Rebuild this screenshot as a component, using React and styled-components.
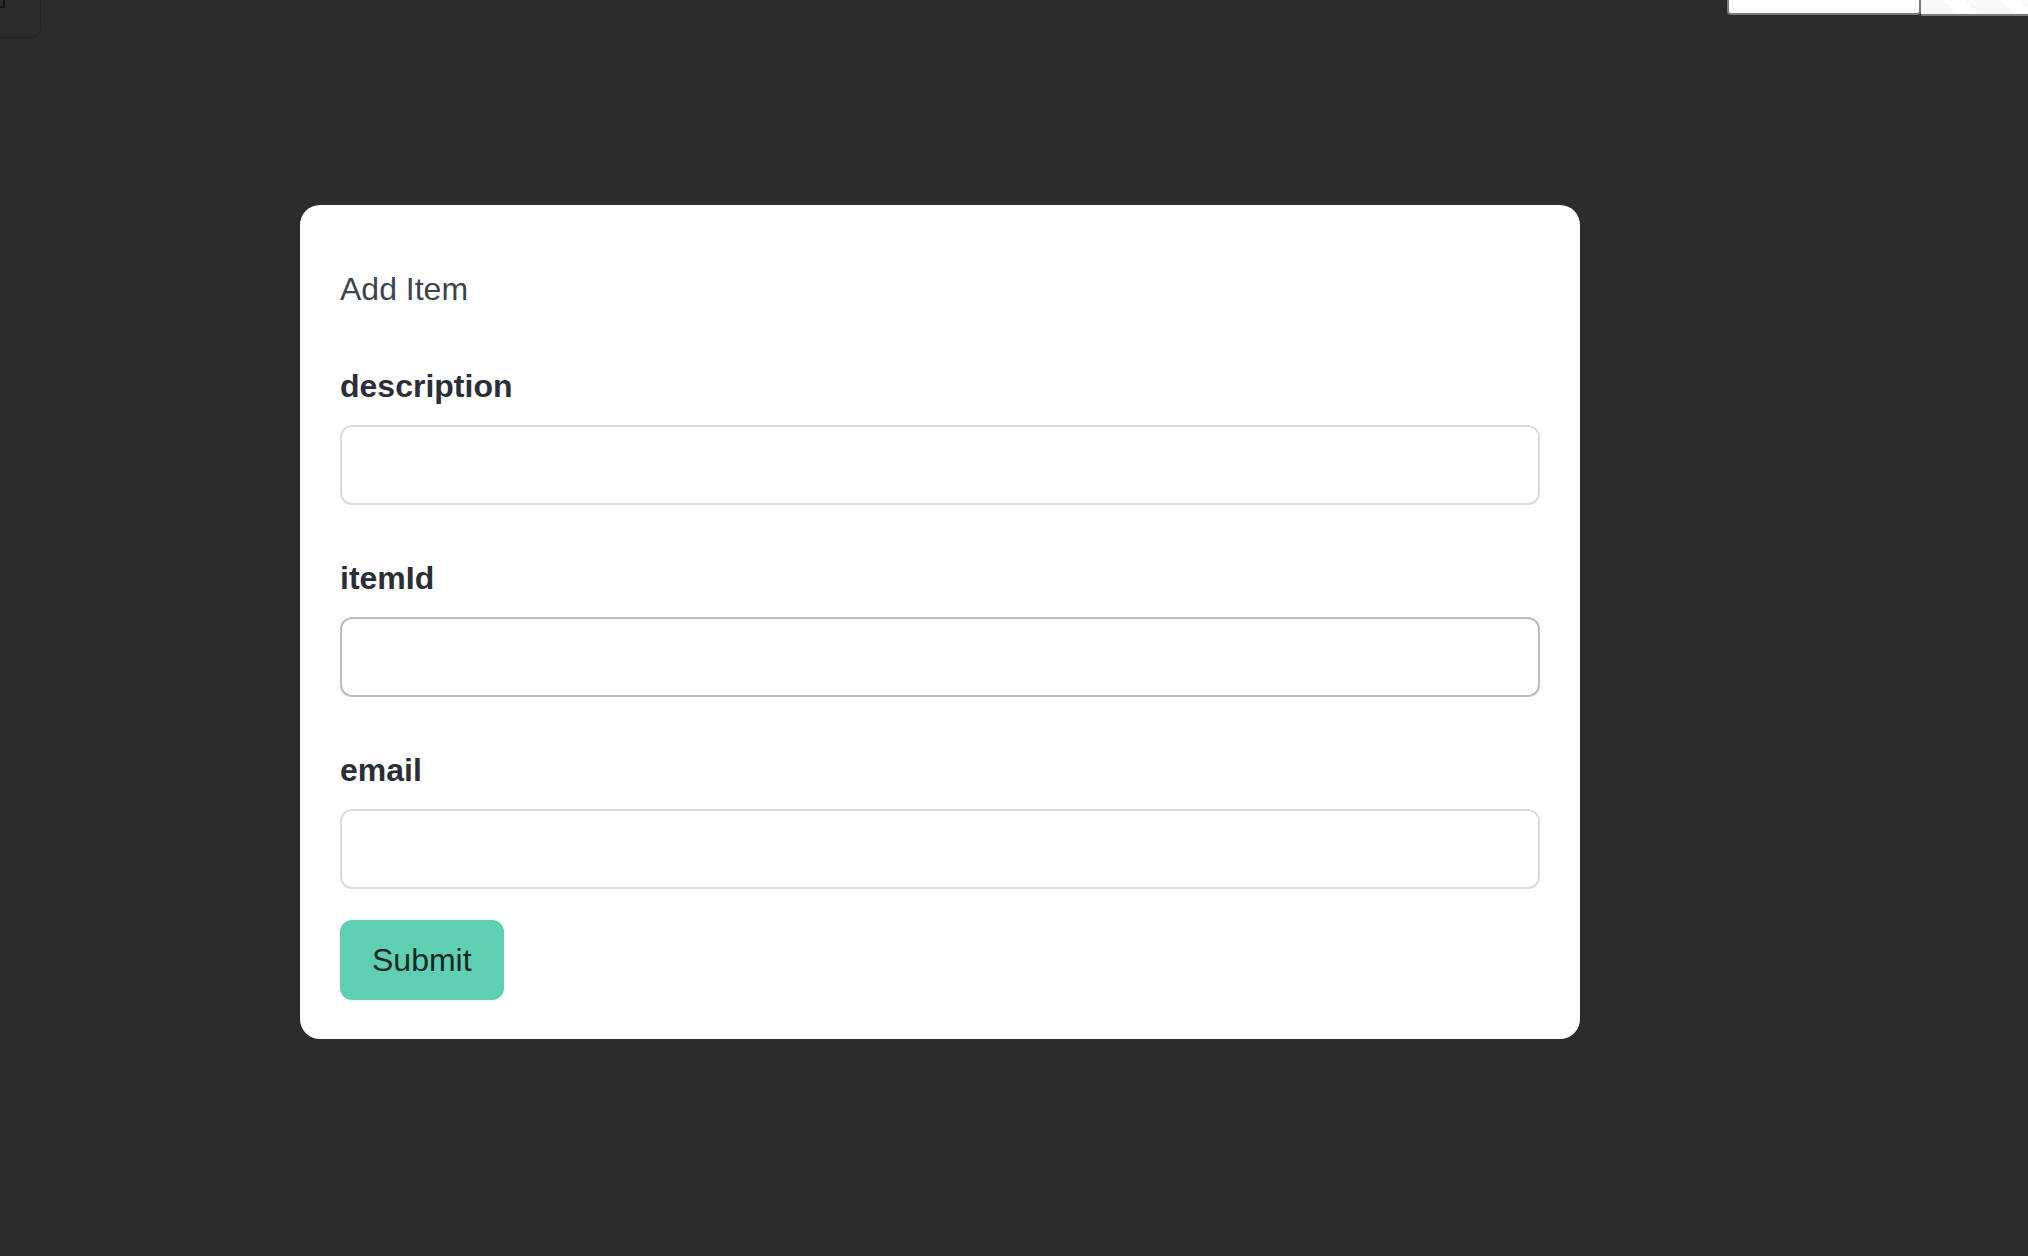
import React from "react";
import styled, { createGlobalStyle, css } from "styled-components";

const GlobalStyle = createGlobalStyle`
  html, body {
    margin: 0;
    padding: 0;
    background: #2c2c2e;
    font-family: "Liberation Sans", Arial, sans-serif;
  }
  * {
    box-sizing: border-box;
  }
`;

const Page = styled.div`
  position: relative;
  width: 2028px;
  height: 1256px;
  overflow: hidden;
  background: #2c2c2e;
  padding: 205px 0 0 300px;
`;

const GhostTab = styled.div`
  position: absolute;
  left: -10px;
  top: -10px;
  width: 51px;
  height: 48px;
  border: 1px solid #242426;
  border-radius: 10px;
`;

const GhostGlyph = styled.div`
  position: absolute;
  left: 0;
  top: 0;
  width: 5px;
  height: 8px;
  border-right: 2px solid #151517;
  border-bottom: 2px solid #151517;
  border-bottom-right-radius: 2px;
`;

const TopBar = styled.div`
  position: absolute;
  top: 0;
  right: 0;
  display: flex;
  height: 16px;
`;

const TopField = styled.div`
  width: 194px;
  height: 15px;
  background: #ffffff;
  border: 2px solid #7a7a7a;
  border-top: none;
  border-radius: 0 0 4px 4px;
`;

const TopStripes = styled.div`
  width: 107px;
  height: 16px;
  border-bottom: 2px solid #7a7a7a;
  background: repeating-linear-gradient(
    45deg,
    #f8f8f8 0px,
    #f8f8f8 26px,
    #ffffff 26px,
    #ffffff 40px
  );
`;

const Card = styled.div`
  width: 1280px;
  background: #ffffff;
  border-radius: 20px;
  padding: 64px 40px 39px 40px;
  display: flex;
  flex-direction: column;
`;

const Title = styled.h2`
  margin: 0 0 57px;
  font-size: 32px;
  line-height: 40px;
  font-weight: 400;
  color: #3e4350;
`;

const Form = styled.form`
  display: flex;
  flex-direction: column;
  gap: 53px;
`;

const Field = styled.div`
  display: flex;
  flex-direction: column;
  gap: 19px;
`;

const Label = styled.label`
  font-size: 32px;
  line-height: 40px;
  font-weight: 700;
  color: #2a2e37;
`;

const Input = styled.input`
  width: 100%;
  height: 80px;
  border-radius: 12px;
  border: 2px solid #d8dbe0;
  background: #ffffff;
  font-family: inherit;
  font-size: 32px;
  padding: 0 20px;
  outline: none;

  ${({ active }) =>
    active &&
    css`
      border-color: #b9bdc8;
    `}
`;

const Actions = styled.div`
  margin-top: -22px;
  display: flex;
`;

const SubmitButton = styled.button`
  height: 80px;
  padding: 0 32px;
  border: none;
  border-radius: 12px;
  background: #5fcfb3;
  color: #0f2621;
  font-family: inherit;
  font-size: 32px;
  line-height: 40px;
  cursor: pointer;
`;

const fields = [
  { name: "description" },
  { name: "itemId", active: true },
  { name: "email" },
];

export default function App() {
  return (
    <>
      <GlobalStyle />
      <Page>
        <GhostTab />
        <GhostGlyph />
        <TopBar>
          <TopField />
          <TopStripes />
        </TopBar>
        <Card>
          <Title>Add Item</Title>
          <Form onSubmit={(e) => e.preventDefault()}>
            {fields.map((f) => (
              <Field key={f.name}>
                <Label htmlFor={f.name}>{f.name}</Label>
                <Input id={f.name} name={f.name} active={f.active ? 1 : 0} />
              </Field>
            ))}
            <Actions>
              <SubmitButton type="submit">Submit</SubmitButton>
            </Actions>
          </Form>
        </Card>
      </Page>
    </>
  );
}
